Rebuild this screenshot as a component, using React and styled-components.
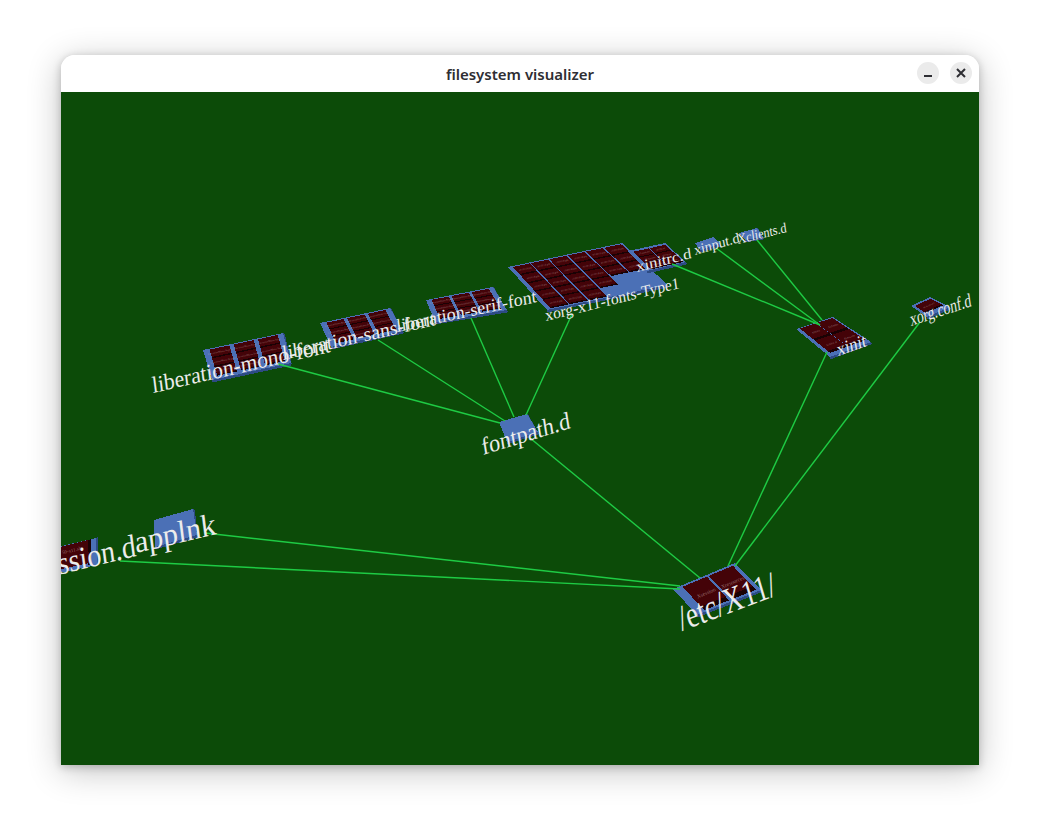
import React from 'react';
import styled, { createGlobalStyle } from 'styled-components';

const GlobalStyle = createGlobalStyle`
  html, body {
    margin: 0;
    background: #fff;
  }
`;

const lerp = (a, b, t) => [a[0] + (b[0] - a[0]) * t, a[1] + (b[1] - a[1]) * t];
const quadPoint = ([tl, tr, br, bl], u, v) => lerp(lerp(tl, tr, u), lerp(bl, br, u), v);
const toPoints = (pts) => pts.map((p) => `${p[0].toFixed(1)},${p[1].toFixed(1)}`).join(' ');

const EDGES = [
  [[278, 364], [500, 423]],
  [[378, 340], [505, 421]],
  [[471, 318], [514, 417]],
  [[572, 314], [526, 415]],
  [[530, 438], [700, 578]],
  [[827, 352], [728, 566]],
  [[920, 322], [735, 566]],
  [[672, 264], [820, 325]],
  [[716, 248], [820, 325]],
  [[757, 240], [822, 320]],
  [[205, 533], [680, 586]],
  [[120, 561], [680, 589]],
];

const fontNames = ['LiberationMono-Regular', 'LiberationMono-Bold', 'LiberationMono-Italic'];

const DIRS = [
  { quad: [[203, 350], [283, 333], [291, 363], [212, 380]], cols: 3, rows: 3, inset: [0.03, 0.04, 0.1, 0.05], gap: 0.055, nameSize: 2.6, names: fontNames },
  { quad: [[320, 323], [390, 308], [403, 331], [331, 347]], cols: 3, rows: 3, inset: [0.04, 0.05, 0.1, 0.06], gap: 0.05, nameSize: 2.4, names: fontNames },
  { quad: [[426, 300], [493, 287], [507, 310], [435, 322]], cols: 3, rows: 3, inset: [0.04, 0.05, 0.1, 0.06], gap: 0.04, nameSize: 2.4, names: fontNames },
  {
    quad: [[508, 267], [622, 243], [668, 285], [547, 310]],
    cols: 6,
    rows: 5,
    inset: [0.02, 0.01, 0.02, 0.03],
    gap: 0.012,
    nameSize: 2.4,
    skip: (row, col) => (row === 3 && col > 3) || (row === 4 && col > 2),
    names: ['a010013l.pfb', 'b018012l.pfb', 'c059013l.pfb'],
  },
  { quad: [[628, 251], [665, 243], [686, 262], [647, 271]], cols: 2, rows: 3, inset: [0.08, 0.03, 0.03, 0.1], gap: 0.02, nameSize: 2.4, names: ['50-systemd', '40-libcan'] },
  { quad: [[796, 329], [833, 317], [871, 342], [830, 357]], cols: 2, rows: 2, inset: [0.02, 0.03, 0.1, 0.08], gap: 0.012, nameSize: 3.2, names: ['xinitrc', 'Xclients', 'xinitrc.d', 'Xsession'] },
  { quad: [[911, 306], [930, 297], [950, 307], [927, 317]], cols: 1, rows: 1, inset: [0.1, 0.08, 0.25, 0.12], gap: 0, nameSize: 2.4, names: ['00-keyboard'] },
  { quad: [[673, 589], [735, 563], [761, 590], [697, 615]], cols: 2, rows: 1, inset: [0.05, 0.04, 0.06, 0.12], gap: 0.03, nameSize: 5.5, names: ['Xsession', 'Xresources'] },
];

const BARE_PLATES = [
  [[695, 243], [713, 237], [720, 244], [700, 250]],
  [[739, 233], [757, 228], [763, 237], [745, 240]],
  [[499, 422], [527, 414], [538, 432], [507, 442]],
  [[154, 520], [193, 509], [197, 535], [155, 547]],
];

const LABELS = [
  { text: 'liberation-mono-font', from: [153, 393], to: [331, 352], size: 23, skew: -6 },
  { text: 'liberation-sans-font', from: [283, 360], to: [436, 325], size: 20, skew: -6 },
  { text: 'liberation-serif-font', from: [397, 332], to: [537, 302], size: 18, skew: -6 },
  { text: 'xorg-x11-fonts-Type1', from: [546, 321], to: [680, 288], size: 16, skew: -6 },
  { text: 'xinitrc.d', from: [637, 272], to: [692, 258], size: 15, skew: -6 },
  { text: 'xinput.d', from: [695, 255], to: [740, 242], size: 14, skew: -6 },
  { text: 'Xclients.d', from: [738, 244], to: [787, 232], size: 14, skew: -6 },
  { text: 'xinit', from: [838, 356], to: [867, 346], size: 18, skew: -10 },
  { text: 'xorg.conf.d', from: [911, 326], to: [972, 306], size: 19, skew: -10 },
  { text: 'fontpath.d', from: [483, 455], to: [571, 428], size: 24, skew: -8 },
  { text: '/etc/X11/', from: [682, 631], to: [778, 595], size: 36, skew: -4 },
  { text: 'Xsession.d', from: [16, 585], to: [137, 556], size: 32, skew: -6 },
  { text: 'applnk', from: [136, 553], to: [217, 534], size: 31, skew: -6 },
];

const Page = styled.div`
  box-sizing: border-box;
  width: 1040px;
  height: 832px;
  padding: 55px 61px 67px;
`;

const Window = styled.main`
  display: flex;
  flex-direction: column;
  height: 710px;
  border-radius: 14px 14px 0 0;
  background: #fff;
  box-shadow: 0 2px 8px rgba(0, 0, 0, 0.22), 0 6px 34px rgba(0, 0, 0, 0.24);
  overflow: hidden;
`;

const TitleBar = styled.header`
  position: relative;
  flex: none;
  display: flex;
  align-items: center;
  justify-content: center;
  height: 37px;
  background: #fff;
`;

const Title = styled.h1`
  margin: 0;
  font: 600 15px 'Noto Sans', 'Open Sans', sans-serif;
  color: #2e2e33;
`;

const Controls = styled.div`
  position: absolute;
  top: 7px;
  right: 7px;
  display: flex;
  gap: 11px;
`;

const WindowButton = styled.button`
  display: flex;
  align-items: center;
  justify-content: center;
  width: 22px;
  height: 22px;
  padding: 0;
  border: 0;
  border-radius: 50%;
  background: #ebebeb;
  color: #2e2e33;
`;

const Scene = styled.svg`
  flex: 1;
  display: block;
  width: 918px;
  background: #0c4b08;
`;

const Edge = styled.line`
  stroke: #1ecb44;
  stroke-width: 1.4;
`;

const PlateTop = styled.polygon`
  fill: #4b70b6;
  shape-rendering: crispEdges;
`;

const PlateSide = styled.polygon`
  fill: #2d4b83;
  shape-rendering: crispEdges;
`;

const CellTop = styled.polygon`
  fill: #440308;
  shape-rendering: crispEdges;
`;

const CellSide = styled.polygon`
  fill: #1a0204;
  shape-rendering: crispEdges;
`;

const CellName = styled.text`
  font-family: 'Liberation Serif', serif;
  fill: #cdb4b4;
  fill-opacity: 0.6;
  text-anchor: middle;
`;

const LabelText = styled.text`
  font-family: 'Liberation Serif', serif;
  fill: #ececec;
`;

const Plate = ({ quad }) => (
  <>
    <PlateSide points={toPoints([quad[3], quad[2], [quad[2][0], quad[2][1] + 2.5], [quad[3][0], quad[3][1] + 2.5]])} />
    <PlateSide points={toPoints([quad[1], quad[2], [quad[2][0] + 1, quad[2][1] + 2.5], [quad[1][0] + 2, quad[1][1] + 2]])} />
    <PlateTop points={toPoints(quad)} />
  </>
);

const Cell = ({ corners, name, nameSize }) => {
  const top = [corners[0], corners[1], quadPoint(corners, 1, 0.85), quadPoint(corners, 0, 0.85)];
  const mid = quadPoint(corners, 0.5, 0.55);
  const angle = (Math.atan2(corners[1][1] - corners[0][1], corners[1][0] - corners[0][0]) * 180) / Math.PI;
  return (
    <>
      <CellSide points={toPoints(corners)} />
      <CellTop points={toPoints(top)} />
      <CellName
        fontSize={nameSize}
        transform={`translate(${mid[0].toFixed(1)} ${mid[1].toFixed(1)}) rotate(${angle.toFixed(1)})`}
      >
        {name}
      </CellName>
    </>
  );
};

const Directory = ({ quad, cols, rows, inset, gap, nameSize, skip, names }) => {
  const [top, right, bottom, left] = inset;
  const spanU = (1 - left - right) / cols;
  const spanV = (1 - top - bottom) / rows;
  const cells = [];
  for (let row = 0; row < rows; row += 1) {
    for (let col = 0; col < cols; col += 1) {
      if (!skip || !skip(row, col)) {
        const u0 = left + col * spanU + gap / 2;
        const u1 = left + (col + 1) * spanU - gap / 2;
        const v0 = top + row * spanV;
        const v1 = top + (row + 1) * spanV;
        cells.push({
          key: `${row}-${col}`,
          name: names[(row * cols + col) % names.length],
          corners: [quadPoint(quad, u0, v0), quadPoint(quad, u1, v0), quadPoint(quad, u1, v1), quadPoint(quad, u0, v1)],
        });
      }
    }
  }
  return (
    <>
      <Plate quad={quad} />
      {cells.map(({ key, name, corners }) => (
        <Cell key={key} corners={corners} name={name} nameSize={nameSize} />
      ))}
    </>
  );
};

const Label = ({ text, from, to, size, skew }) => {
  const length = Math.hypot(to[0] - from[0], to[1] - from[1]);
  const angle = (Math.atan2(to[1] - from[1], to[0] - from[0]) * 180) / Math.PI;
  return (
    <LabelText
      fontSize={size}
      textLength={length}
      lengthAdjust="spacingAndGlyphs"
      transform={`translate(${from[0]} ${from[1]}) rotate(${angle.toFixed(2)}) skewX(${skew})`}
    >
      {text}
    </LabelText>
  );
};

// the session folder sits half outside the view on the left
const SessionNode = () => (
  <>
    <PlateSide points="96,538 98,537 98,564 96,566" />
    <PlateTop points="40,551 96,538 97,565 40,577" />
    <CellSide points="88,540 91,539 91,564 88,565" />
    <CellTop points="40,552 88,540 89,563 40,574" />
    <CellName fontSize={5} transform="translate(72 552) rotate(-13)">50-x11.sh</CellName>
  </>
);

export default function App() {
  return (
    <Page>
      <GlobalStyle />
      <Window>
        <TitleBar>
          <Title>filesystem visualizer</Title>
          <Controls>
            <WindowButton aria-label="Minimize">
              <svg width="10" height="10" viewBox="0 0 10 10">
                <rect x="1" y="7" width="8" height="2" fill="currentColor" />
              </svg>
            </WindowButton>
            <WindowButton aria-label="Close">
              <svg width="10" height="10" viewBox="0 0 10 10">
                <path d="M1 1l8 8M9 1l-8 8" stroke="currentColor" strokeWidth="2" fill="none" />
              </svg>
            </WindowButton>
          </Controls>
        </TitleBar>
        <Scene viewBox="61 92 918 673" preserveAspectRatio="none">
          {BARE_PLATES.map((quad) => (
            <Plate key={quad[0].join()} quad={quad} />
          ))}
          <SessionNode />
          {DIRS.map((dir) => (
            <Directory key={dir.quad[0].join()} {...dir} />
          ))}
          {EDGES.map(([a, b]) => (
            <Edge key={`${a}-${b}`} x1={a[0]} y1={a[1]} x2={b[0]} y2={b[1]} />
          ))}
          {LABELS.map((label) => (
            <Label key={label.text} {...label} />
          ))}
        </Scene>
      </Window>
    </Page>
  );
}
